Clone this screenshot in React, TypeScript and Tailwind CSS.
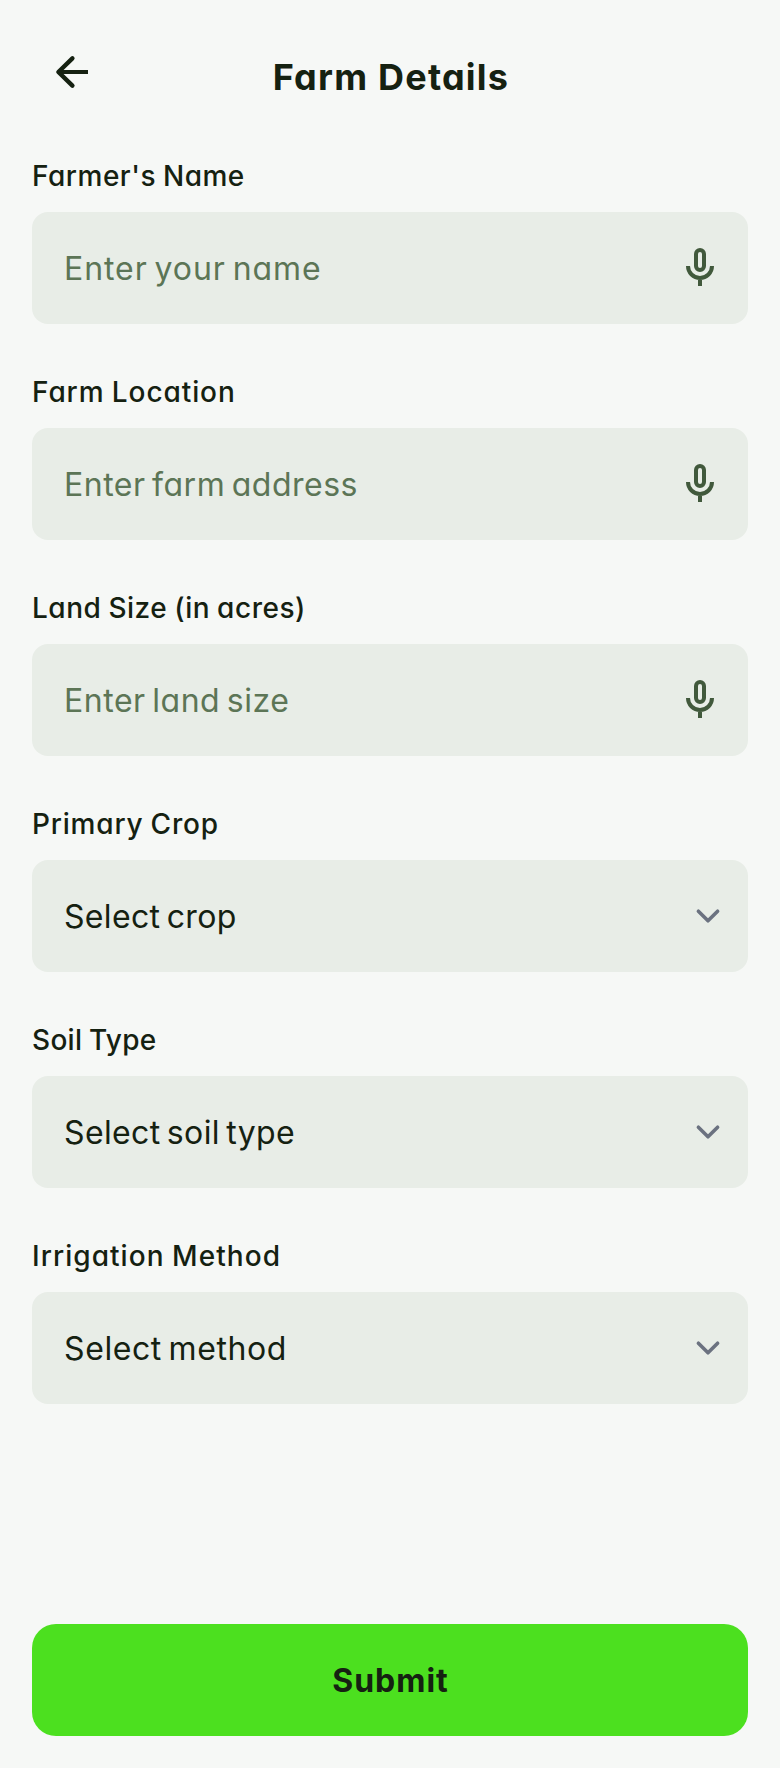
const INK = 'text-[#152111]';

function ArrowLeft() {
  return (
    <svg viewBox="0 0 24 24" className="size-12" fill="none" stroke="currentColor" strokeWidth="2" aria-hidden="true">
      <path d="M20 12H5.2" />
      <path d="M12.2 5.2L5.2 12l7 6.8" strokeWidth="2.2" strokeLinejoin="round" strokeLinecap="round" />
    </svg>
  );
}

function Mic() {
  return (
    <svg viewBox="0 0 24 24" className="size-12 text-[#41593c]" fill="none" stroke="currentColor" strokeWidth="2" aria-hidden="true">
      <rect x="10" y="3" width="4" height="10" rx="2" />
      <path d="M6 11a6 6 0 0 0 12 0M12 17v4" />
    </svg>
  );
}

function Chevron() {
  return (
    <svg viewBox="0 0 20 20" className="-mr-2 size-12 text-[#6b7280]" fill="none" stroke="currentColor" strokeWidth="1.5" strokeLinecap="round" strokeLinejoin="round" aria-hidden="true">
      <path d="M6 8l4 4 4-4" />
    </svg>
  );
}

type FieldProps = {
  label: string;
  value: string;
  kind: 'input' | 'select';
  labelSpacing: string;
  valueSpacing: string;
};

const fields: FieldProps[] = [
  { label: "Farmer's Name", value: 'Enter your name', kind: 'input', labelSpacing: 'tracking-[0.51px]', valueSpacing: 'tracking-[0.93px]' },
  { label: 'Farm Location', value: 'Enter farm address', kind: 'input', labelSpacing: 'tracking-[0.91px]', valueSpacing: 'tracking-[0.51px]' },
  { label: 'Land Size (in acres)', value: 'Enter land size', kind: 'input', labelSpacing: 'tracking-[0.53px]', valueSpacing: 'tracking-[0.54px]' },
  { label: 'Primary Crop', value: 'Select crop', kind: 'select', labelSpacing: 'tracking-[0.8px]', valueSpacing: 'tracking-[0.34px]' },
  { label: 'Soil Type', value: 'Select soil type', kind: 'select', labelSpacing: 'tracking-[0.29px]', valueSpacing: 'tracking-[0.36px]' },
  { label: 'Irrigation Method', value: 'Select method', kind: 'select', labelSpacing: 'tracking-[1.05px]', valueSpacing: 'tracking-[0.6px]' },
];

function Field({ label, value, kind, labelSpacing, valueSpacing }: FieldProps) {
  return (
    <div className="flex flex-col gap-4">
      <span className={`flex h-10 items-center whitespace-nowrap text-[28px] font-medium leading-10 [word-spacing:-1px] ${labelSpacing}`}>{label}</span>
      <div className="flex h-28 items-center justify-between rounded-2xl bg-[#e8ede7] pl-8 pr-6">
        <span className={`whitespace-nowrap pt-0.5 text-[32px] leading-12 [word-spacing:-3px] ${kind === 'input' ? 'text-[#5c7556]' : INK} ${valueSpacing}`}>{value}</span>
        {kind === 'input' ? <Mic /> : <Chevron />}
      </div>
    </div>
  );
}

export default function App() {
  return (
    <div className={`flex h-[1768px] w-[780px] flex-col bg-[#f6f8f6] font-['Inter','Lato',sans-serif] [font-feature-settings:'cv11'] ${INK}`}>
      <header className="flex h-[156px] items-start px-12 pt-12">
        <button type="button" aria-label="Back" className="flex size-12"><ArrowLeft /></button>
        <h1 className="flex-1 pl-0.5 pr-12 pt-1.5 text-center text-[36px] font-bold leading-[46px] tracking-[1.22px]">Farm Details</h1>
      </header>
      <main className="flex flex-1 flex-col gap-12 px-8">
        {fields.map((f) => <Field key={f.label} {...f} />)}
      </main>
      <footer className="px-8 pb-8">
        <button type="button" className="flex h-28 w-full items-center justify-center rounded-3xl bg-[#4ce01f] pl-px pt-0.5 text-[32px] font-bold leading-12 tracking-[1px]">Submit</button>
      </footer>
    </div>
  );
}
